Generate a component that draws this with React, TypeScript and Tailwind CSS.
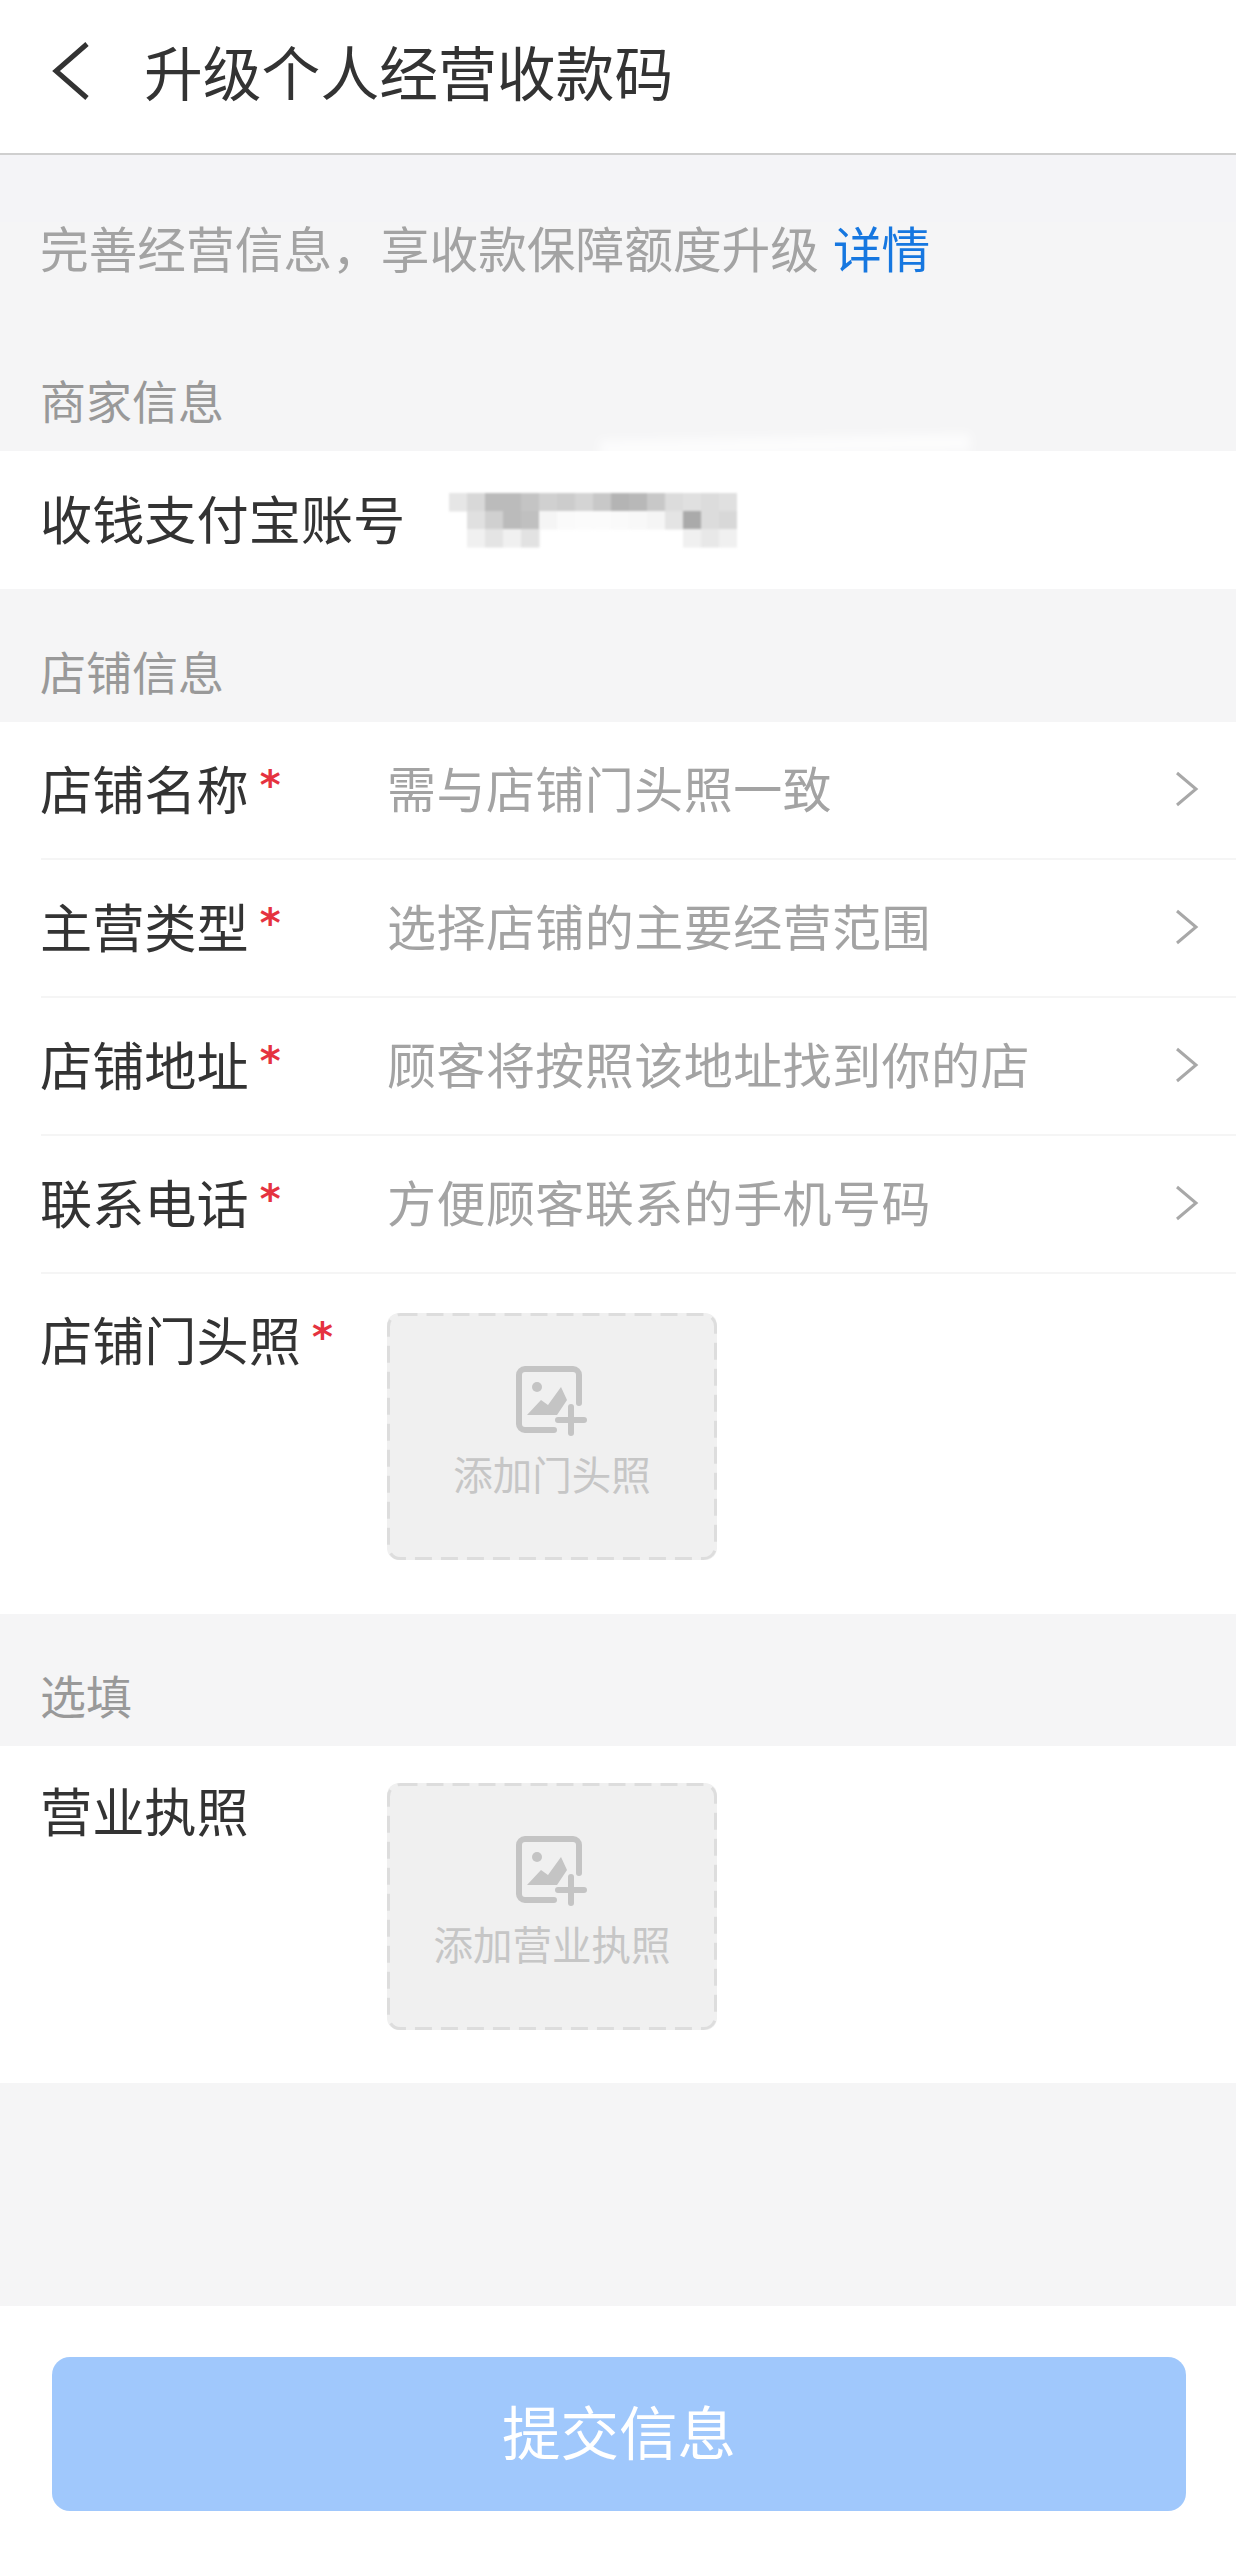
const font = { fontFamily: '"Noto Sans CJK SC", "Noto Sans", sans-serif' };

const mosaic: [number, number, string][] = [
  [0,0,'#e6e6e6'],[1,0,'#d8d8d8'],[2,0,'#bbbbbb'],[3,0,'#bbbbbb'],[4,0,'#c4c4c4'],[5,0,'#d0d0d0'],[6,0,'#cccccc'],[7,0,'#d4d4d4'],[8,0,'#c8c8c8'],[9,0,'#b4b4b4'],[10,0,'#b8b8b8'],[11,0,'#c8c8c8'],[12,0,'#dcdcdc'],[13,0,'#e0e0e0'],[14,0,'#dcdcdc'],[15,0,'#e0e0e0'],
  [1,1,'#e0e0e0'],[2,1,'#d0d0d0'],[3,1,'#bbbbbb'],[4,1,'#c0c0c0'],[5,1,'#f5f5f5'],[6,1,'#fafafa'],[7,1,'#fbfbfb'],[8,1,'#fbfbfb'],[9,1,'#fafafa'],[10,1,'#f8f8f8'],[11,1,'#f5f5f5'],[12,1,'#e4e4e4'],[13,1,'#aaaaaa'],[14,1,'#dcdcdc'],[15,1,'#d8d8d8'],
  [1,2,'#f0f0f0'],[2,2,'#e4e4e4'],[3,2,'#f0f0f0'],[4,2,'#e2e2e2'],[13,2,'#f0f0f0'],[14,2,'#e8e8e8'],[15,2,'#f0f0f0'],
];

function Star() {
  return <span className="ml-[11px] text-[#e5333f] text-[40px] leading-[46px] font-bold font-['DejaVu_Sans'] -translate-y-[2px]">*</span>;
}

function Chevron() {
  return (
    <svg width="24" height="36" viewBox="0 0 24 36" fill="none" stroke="#a8a8a8" strokeWidth="3" className="mr-[37px] ml-auto translate-y-[2px]">
      <path d="M2 2 L21 18 L2 34" />
    </svg>
  );
}

function SectionHead({ title, h }: { title: string; h: string }) {
  return (
    <div className={`${h} flex items-end pl-[40px] pb-[27px] text-[#999999] text-[46px] leading-[50px]`}>{title}</div>
  );
}

function Row({ label, hint, h }: { label: string; hint: string; h: string }) {
  return (
    <div className={`${h} flex items-center border-b-2 border-[#f5f5f5] pb-[7px]`}>
      <div className="w-[346px] -ml-[1px] mr-[1px] flex items-center text-[#333333] text-[52.2px] leading-[60px]">
        {label}
        <Star />
      </div>
      <div className="text-[#a3a3a3] text-[49px] leading-[60px] tracking-[0.45px]">{hint}</div>
      <Chevron />
    </div>
  );
}

function Upload({ text }: { text: string }) {
  return (
    <div className="relative w-[330px] h-[247px] rounded-[12px] bg-[#f0f0f0] flex flex-col items-center pt-[53px]">
      <svg width="330" height="247" viewBox="0 0 330 247" fill="none" className="absolute inset-0">
        <rect x="1.5" y="1.5" width="327" height="244" rx="12" stroke="#dddddd" strokeWidth="3" strokeDasharray="17 9" />
      </svg>
      <svg width="72" height="70" viewBox="0 0 72 70" fill="none" stroke="#c4c4c4" strokeWidth="6">
        <path d="M38 64 H9 a6 6 0 0 1 -6 -6 V9 a6 6 0 0 1 6 -6 H57 a6 6 0 0 1 6 6 V37" strokeLinecap="round" />
        <circle cx="21" cy="21" r="5" fill="#c4c4c4" stroke="none" />
        <path d="M11 49 L25 34 L32 39 L45 21 L51 34 L41 49 Z" fill="#c4c4c4" stroke="none" />
        <path d="M42 54 H68 M55 41 V67" strokeLinecap="round" />
      </svg>
      <div className="mt-[14px] text-[#c6c6c6] text-[39.5px] leading-[46px] whitespace-nowrap">{text}</div>
    </div>
  );
}

export default function App() {
  return (
    <div style={font} className="relative w-[1236px] h-[2560px] bg-[#f5f5f6] overflow-hidden">
      <header className="h-[155px] bg-white border-b-2 border-[#cfcfcf] flex items-center pb-[12px]">
        <svg width="40" height="58" viewBox="0 0 40 58" fill="none" stroke="#333333" strokeWidth="5" className="ml-[51px]">
          <path d="M36 2 L5 29 L36 56" />
        </svg>
        <h1 className="ml-[53px] text-[#333333] text-[58.8px] leading-[80px] font-normal whitespace-nowrap">升级个人经营收款码</h1>
      </header>

      <div className="h-[67px] bg-[#f4f4f7]" />
      <div className="h-[56px] -mt-[3px] mb-[3px] pl-[40px] text-[#a3a3a3] text-[48.7px] leading-[56px] whitespace-nowrap">
        完善经营信息，享收款保障额度升级 <span className="ml-[3px] text-[#1677e0]">详情</span>
      </div>

      <SectionHead title="商家信息" h="h-[173px]" />
      <section className="relative h-[138px] bg-white flex items-center pl-[40px]">
        <div className="absolute left-[600px] top-[-14px] w-[370px] h-[18px] bg-white/70 blur-[5px] rotate-[-1deg]" />
        <span className="text-[#333333] text-[52.2px] leading-[60px] -translate-y-[3px] whitespace-nowrap">收钱支付宝账号</span>
        <svg width="288" height="56" viewBox="0 0 288 56" className="ml-[44px] blur-[1px] translate-y-[1px]">
          {mosaic.map(([x, y, c], i) => (
            <rect key={i} x={x * 18} y={y * 18} width="18.5" height="18.5" fill={c} />
          ))}
        </svg>
      </section>

      <SectionHead title="店铺信息" h="h-[133px]" />
      <section className="bg-white pl-[41px]">
        <Row label="店铺名称" hint="需与店铺门头照一致" h="h-[138px]" />
        <Row label="主营类型" hint="选择店铺的主要经营范围" h="h-[138px]" />
        <Row label="店铺地址" hint="顾客将按照该地址找到你的店" h="h-[138px]" />
        <Row label="联系电话" hint="方便顾客联系的手机号码" h="h-[138px]" />
        <div className="h-[340px] flex pt-[39px]">
          <div className="w-[346px] -ml-[1px] mr-[1px] flex items-start text-[#333333] text-[52.2px] leading-[60px] -mt-[5px]">
            <span className="whitespace-nowrap">店铺门头照</span>
            <span className="ml-[11px] mt-[6px] text-[#e5333f] text-[40px] leading-[46px] font-bold font-['DejaVu_Sans']">*</span>
          </div>
          <div>
            <Upload text="添加门头照" />
          </div>
        </div>
      </section>

      <SectionHead title="选填" h="h-[132px]" />
      <section className="h-[337px] bg-white pl-[40px] flex pt-[37px]">
        <div className="w-[347px] text-[#333333] text-[52.2px] leading-[60px] -mt-[4px]">营业执照</div>
        <Upload text="添加营业执照" />
      </section>

      <div className="h-[223px]" />
      <footer className="h-[255px] bg-white pt-[51px] px-[52px]">
        <div className="h-[154px] w-[1134px] rounded-[18px] bg-[#a0c8fc] flex items-center justify-center pb-[9px] text-white text-[58.5px] leading-[70px]">
          提交信息
        </div>
      </footer>
    </div>
  );
}
